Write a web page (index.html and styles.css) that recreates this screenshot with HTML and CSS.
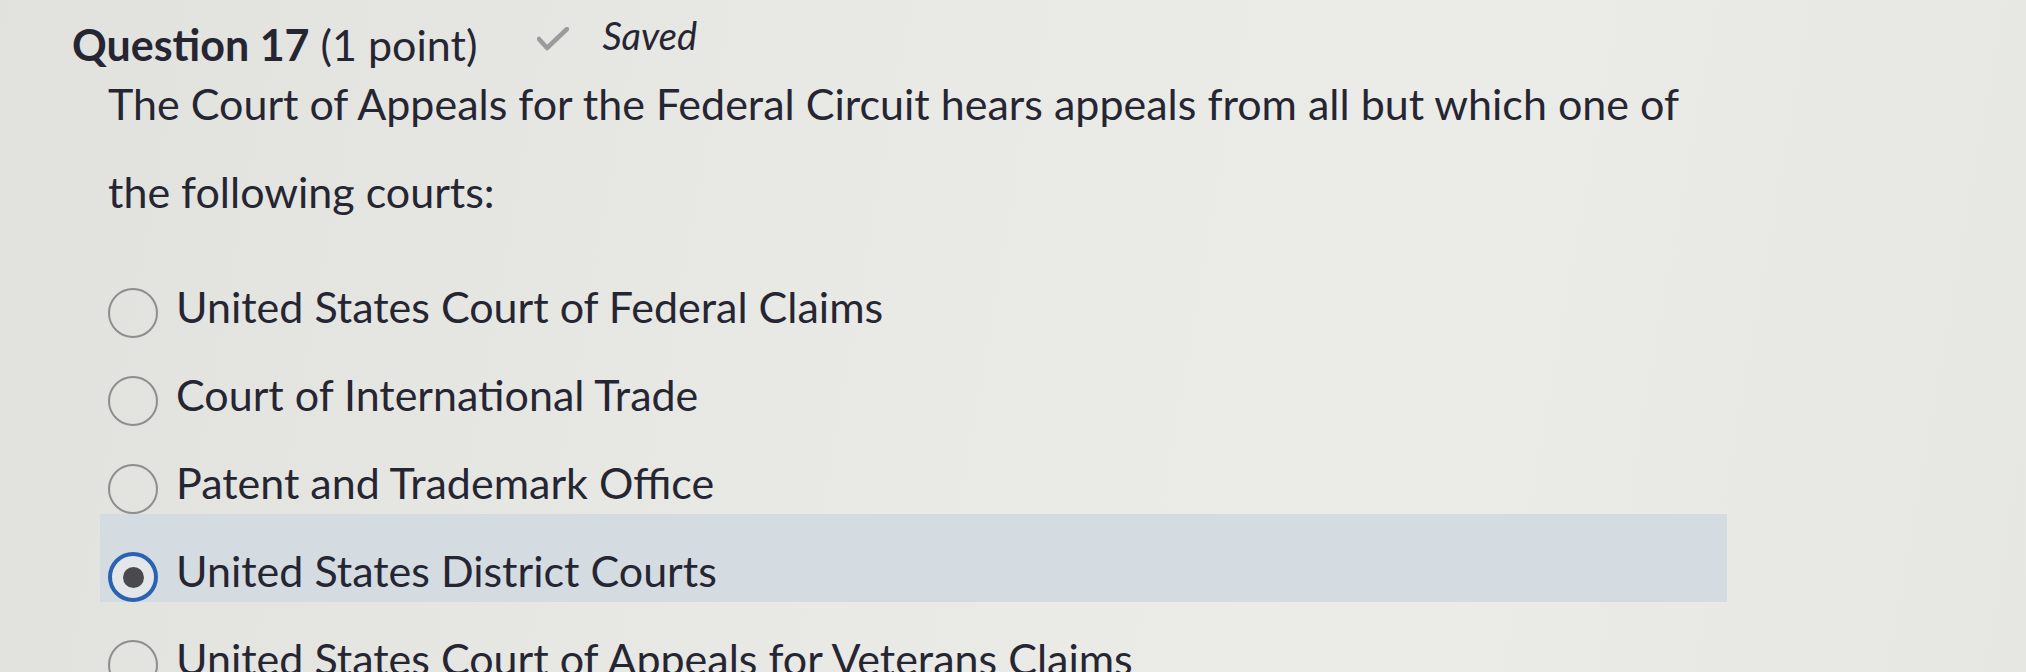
FILE: index.html
```html
<!DOCTYPE html>
<html lang="en">
<head>
<meta charset="utf-8">
<title>Question 17</title>
<link rel="stylesheet" href="styles.css">
</head>
<body>
<main class="page">
  <header class="q-header">
    <h2 class="q-title"><span class="q-num">Question 17</span> <span class="q-points">(1 point)</span></h2>
    <span class="q-status">
      <svg class="check" width="32" height="24" viewBox="0 0 32 24" aria-hidden="true"><polyline points="2,12 10,21 30,2" fill="none" stroke="#9b9b9b" stroke-width="4.5" stroke-linecap="round" stroke-linejoin="round"/></svg>
      <span class="saved">Saved</span>
    </span>
  </header>
  <p class="q-text">The Court of Appeals for the Federal Circuit hears appeals from all but which one of the following courts:</p>
  <ul class="options">
    <li class="option"><span class="radio"></span><span class="label">United States Court of Federal Claims</span></li>
    <li class="option"><span class="radio"></span><span class="label">Court of International Trade</span></li>
    <li class="option"><span class="radio"></span><span class="label">Patent and Trademark Office</span></li>
    <li class="option selected"><span class="radio"></span><span class="label">United States District Courts</span></li>
    <li class="option"><span class="radio"></span><span class="label">United States Court of Appeals for Veterans Claims</span></li>
  </ul>
</main>
</body>
</html>
```

FILE: styles.css
```css
html, body {
  margin: 0;
  padding: 0;
  height: 100%;
  overflow: hidden;
}

body {
  background: linear-gradient(100deg, #e1e1de 0%, #e9e9e6 45%, #ebebe8 70%, #e6e6e3 100%);
  font-family: Lato, "Open Sans", "Liberation Sans", sans-serif;
  color: #262633;
}

.page {
  padding-left: 72px;
}

.q-header {
  display: flex;
  align-items: baseline;
  padding-top: 30px;
  height: 30px;
}

.q-title {
  margin: 0;
  font-size: 43px;
  font-weight: 400;
  line-height: 30px;
}

.q-num {
  font-weight: 700;
}

.q-status {
  display: flex;
  align-items: center;
  margin-left: 60px;
  align-self: center;
}

.check {
  display: block;
  margin-top: -12px;
}

.saved {
  margin-left: 33px;
  font-size: 38px;
  font-style: italic;
  line-height: 30px;
  margin-top: -20px;
}

.q-text {
  margin: 0 0 0 36px;
  max-width: 1620px;
  font-size: 43px;
  line-height: 88px;
}

.options {
  list-style: none;
  margin: 14px 0 0 28px;
  padding: 0;
  width: 1627px;
}

.option {
  display: flex;
  align-items: center;
  height: 88px;
  box-sizing: border-box;
  padding-top: 26px;
  font-size: 43px;
  line-height: 62px;
}

.option.selected {
  background: #d4dce1;
}

.radio {
  flex: none;
  width: 50px;
  height: 50px;
  box-sizing: border-box;
  margin: 12px 18px 0 8px;
  border: 2.5px solid #8e8e8e;
  border-radius: 50%;
  display: flex;
  align-items: center;
  justify-content: center;
}

.selected .radio {
  border: 4px solid #2b62b2;
  background: #e4e7ea;
}

.selected .radio::after {
  content: "";
  width: 21px;
  height: 21px;
  border-radius: 50%;
  background: #4a4a4d;
}

.label {
  white-space: nowrap;
}
```
